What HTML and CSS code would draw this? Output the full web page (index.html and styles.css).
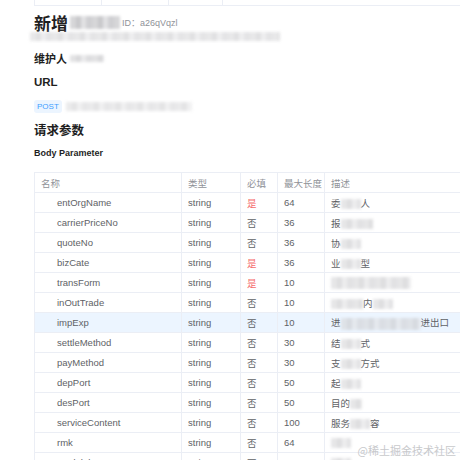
FILE: index.html
```html
<!DOCTYPE html>
<html lang="en">
<head>
    <meta charset="UTF-8">
    <title>新增接口</title>
    <link rel="stylesheet" href="styles.css">
</head>
<body>
    <div class="prev-table">
        <div class="prev-cell w1"></div>
        <div class="prev-cell w2"></div>
        <div class="prev-cell w3"></div>
        <div class="prev-cell w4"></div>
    </div>

    <div class="page">
        <div class="title-row">
            <h1>新增</h1>
            <span class="blur blur-title"></span>
            <span class="api-id">ID：a26qVqzl</span>
        </div>
        <div class="blur blur-desc"></div>

        <div class="meta">
            <span class="meta-label">维护人</span>
            <span class="blur blur-name"></span>
        </div>

        <h3 class="sub">URL</h3>
        <div class="url-row">
            <span class="method">POST</span>
            <span class="blur blur-url"></span>
        </div>

        <h2 class="section">请求参数</h2>
        <h4 class="body-title">Body Parameter</h4>

        <table class="params">
            <thead>
                <tr>
                    <th class="c-name">名称</th>
                    <th class="c-type">类型</th>
                    <th class="c-req">必填</th>
                    <th class="c-len">最大长度</th>
                    <th class="c-desc">描述</th>
                </tr>
            </thead>
            <tbody>
                <tr><td class="name">entOrgName</td><td>string</td><td class="yes">是</td><td>64</td><td>委<span class="blur b-s"></span>人</td></tr>
                <tr><td class="name">carrierPriceNo</td><td>string</td><td>否</td><td>36</td><td>报<span class="blur b-m"></span></td></tr>
                <tr><td class="name">quoteNo</td><td>string</td><td>否</td><td>36</td><td>协<span class="blur b-s"></span></td></tr>
                <tr><td class="name">bizCate</td><td>string</td><td class="yes">是</td><td>36</td><td>业<span class="blur b-s"></span>型</td></tr>
                <tr><td class="name">transForm</td><td>string</td><td class="yes">是</td><td>10</td><td><span class="blur b-l"></span></td></tr>
                <tr><td class="name">inOutTrade</td><td>string</td><td>否</td><td>10</td><td><span class="blur b-m"></span>内<span class="blur b-s"></span></td></tr>
                <tr class="hover"><td class="name">impExp</td><td>string</td><td>否</td><td>10</td><td>进<span class="blur b-l"></span>进出口</td></tr>
                <tr><td class="name">settleMethod</td><td>string</td><td>否</td><td>30</td><td>结<span class="blur b-s"></span>式</td></tr>
                <tr><td class="name">payMethod</td><td>string</td><td>否</td><td>30</td><td>支<span class="blur b-s"></span>方式</td></tr>
                <tr><td class="name">depPort</td><td>string</td><td>否</td><td>50</td><td>起<span class="blur b-s"></span></td></tr>
                <tr><td class="name">desPort</td><td>string</td><td>否</td><td>50</td><td>目的<span class="blur b-xs"></span></td></tr>
                <tr><td class="name">serviceContent</td><td>string</td><td>否</td><td>100</td><td>服务<span class="blur b-s"></span>容</td></tr>
                <tr><td class="name">rmk</td><td>string</td><td>否</td><td>64</td><td><span class="blur b-s"></span></td></tr>
                <tr><td class="name">modulel</td><td>string</td><td>否</td><td>64</td><td><span class="blur b-s"></span></td></tr>
            </tbody>
        </table>
    </div>

    <div class="watermark">@稀土掘金技术社区</div>
</body>
</html>
```

FILE: styles.css
```css
html, body { margin: 0; padding: 0; overflow: hidden; }
body { font-family: "Liberation Sans", Arial, "Noto Sans CJK SC", sans-serif; color: #303133; width: 460px; height: 460px; position: relative; background: #fff; }

.prev-table { display: flex; margin-left: 34px; height: 5px; border-bottom: 1px solid #ebeef5; }
.prev-cell { border-left: 1px solid #ebeef5; }
.w1 { width: 66px; }
.w2 { width: 66px; }
.w3 { width: 53px; }
.w4 { flex: 1; }

.page { padding-left: 34px; overflow: hidden; height: 454px; }

.title-row { display: flex; align-items: center; height: 26px; margin-top: 3px; }
h1 { font-size: 17px; font-weight: bold; margin: 0; color: #1f1f1f; }
.api-id { font-size: 9px; color: #909399; margin-left: 2px; }

.blur { display: inline-block; background: repeating-linear-gradient(90deg, #d6d6d8 0 6px, #c8c8cb 6px 11px, #e2e2e4 11px 16px, #cfcfd2 16px 22px); filter: blur(1.5px); vertical-align: middle; }
.blur-title { width: 50px; height: 13px; margin-left: 2px; }
.blur-desc { display: block; width: 250px; height: 9px; margin-left: -4px; margin-top: -3px; opacity: 0.55; }
.blur-name { width: 34px; height: 7px; margin-left: 3px; opacity: 0.7; }
.blur-url { width: 126px; height: 9px; margin-left: 4px; opacity: 0.5; }

.meta { display: flex; align-items: center; margin-top: 10px; height: 14px; }
.meta-label { font-size: 11px; font-weight: bold; color: #1f1f1f; }

.sub { font-size: 11.5px; font-weight: bold; margin: 10px 0 0; height: 14px; line-height: 14px; color: #1f1f1f; }

.url-row { display: flex; align-items: center; margin-top: 11px; height: 13px; }
.method { background: #ecf5ff; color: #409eff; font-size: 8px; padding: 2px 3px; border-radius: 3px; line-height: 9px; }

.section { font-size: 12.5px; font-weight: bold; margin: 10px 0 0; height: 16px; line-height: 16px; color: #1f1f1f; }
.body-title { font-size: 9px; font-weight: bold; margin: 8px 0 0; height: 12px; line-height: 12px; color: #1f1f1f; }

.params { border-collapse: collapse; margin-top: 13px; width: 460px; table-layout: fixed; font-size: 9.5px; color: #606266; }
.params th, .params td { border: 1px solid #ebeef5; height: 19px; padding: 0 0 0 6px; text-align: left; white-space: nowrap; overflow: hidden; }
.params th { font-weight: normal; color: #909399; }
.params td.name { padding-left: 22px; }
.params td.yes { color: #f56c6c; }
.params tr.hover td { background: #ecf5ff; }
.c-name { width: 140px; }
.c-type { width: 52px; }
.c-req { width: 30px; }
.c-len { width: 40px; }

.b-xs { width: 12px; height: 10px; opacity: 0.6; }
.b-s { width: 20px; height: 10px; opacity: 0.6; }
.b-m { width: 32px; height: 10px; opacity: 0.6; }
.b-l { width: 80px; height: 12px; opacity: 0.6; }

.watermark { position: absolute; right: 4px; bottom: 2px; font-size: 11px; color: #c8c9cc; font-family: "Noto Sans CJK SC", sans-serif; }
```
